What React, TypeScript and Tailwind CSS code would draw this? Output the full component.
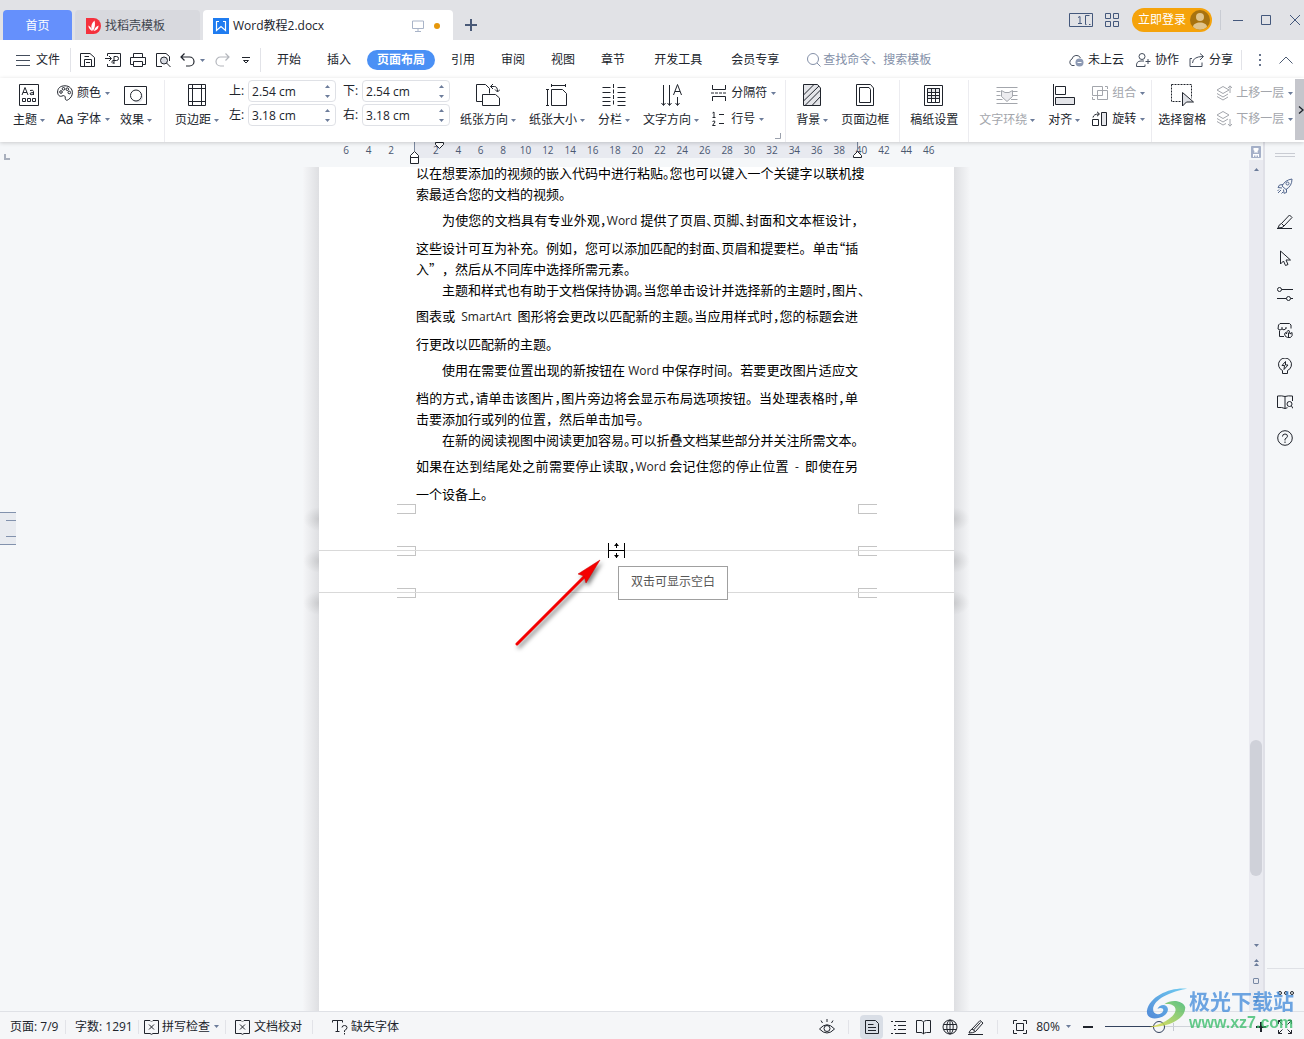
import { Fragment, type ReactNode } from 'react'
import { clsx } from 'clsx'

interface IconProps {
  children: ReactNode
  box?: string
  className?: string
}

function Icon({ children, box = '0 0 16 16', className = 'w-4 h-4' }: IconProps) {
  return (
    <svg viewBox={box} className={clsx('shrink-0', className)} fill="none" stroke="currentColor" aria-hidden="true">
      {children}
    </svg>
  )
}

function Caret() {
  return (
    <svg viewBox="0 0 5 3" className="w-[5px] h-[3px] shrink-0" fill="#6c7c9a" aria-hidden="true">
      <path d="M0 0h5L2.5 3z" />
    </svg>
  )
}

function Sep({ className }: { className?: string }) {
  return <div className={clsx('w-px shrink-0 bg-[#e2e3e8]', className)} />
}

/* ---------- title bar ---------- */

function TitleBar() {
  return (
    <header className="flex h-10 shrink-0 items-end gap-[3px] bg-[#e1e2e6] pl-[3px]">
      <button className="h-[30px] w-[69px] rounded-t bg-[#6590fc] pt-0.5 text-white">首页</button>
      <button className="flex h-[30px] w-[125px] items-center gap-1 rounded-t bg-[#d8d9de] pt-0.5 pl-[11px] text-[#41464f]">
        <Icon className="h-4 w-[15px]" box="0 0 15 16">
          <path d="M0 0h7.500a7.500 8 0 0 1 0 16H0z" fill="#f5313d" stroke="none" />
          <path d="M7 13C4 9 5.500 5.500 8.500 2.500 9.500 6 9 10 7 13zM6.300 13C4.500 12 2.500 10.500 2.300 7.500 4.500 8.500 6 10.500 6.300 13zM8 13c.5-2.500 1.800-4.500 4.500-5.500C12.700 10.500 10.500 12.500 8 13z" fill="#fff" stroke="none" />
        </Icon>
        找稻壳模板
      </button>
      <div className="flex h-[30px] w-[250px] items-center rounded-t bg-white pt-0.5 pr-[13px] pl-2.5">
        <Icon>
          <path d="M0 0h16v16H0z" fill="#1f7cf0" stroke="none" />
          <path d="M3.500 3.500v9L8 8.500l4.500 4v-9" stroke="#fff" strokeWidth="1.200" />
          <path d="M3 3.500h3M10 3.500h3" stroke="#fff" />
        </Icon>
        <span className="ml-1">Word教程2.docx</span>
        <Icon className="ml-auto h-3 w-3" box="0 0 12 12">
          <path d="M.5 1h11v7.500H.5zM6 8.500V11M3 11.500h6" stroke="#a9b4c8" />
        </Icon>
        <span className="ml-2.5 h-1.5 w-1.5 rounded-full bg-[#e6970b]" />
      </div>
      <button aria-label="新建标签" className="ml-[5px] flex h-[30px] w-5 items-center justify-center text-[#4a5a78]">
        <Icon className="h-3 w-3" box="0 0 12 12">
          <path d="M6 0v12M0 6h12" strokeWidth="2" />
        </Icon>
      </button>

      <div className="mr-1 ml-auto flex h-full items-center text-[#44587c]">
        <Icon className="h-4 w-6" box="0 0 24 16">
          <path d="M.5 1.500h23v13H.5zM16.500 3.500h4M16.500 3.500v9h1M20 12.500h1.500M9 11.500h4M11 11.500V4.500L9 5.500" />
        </Icon>
        <Icon className="ml-3 h-3.5 w-3.5" box="0 0 14 14">
          <path d="M.5.5h5v5h-5zM8.500.5h5v5h-5zM.5 8.500h5v5h-5zM8.500 8.500h5v5h-5z" />
        </Icon>
        <button className="ml-[13px] flex h-6 w-20 items-center justify-between rounded-full bg-[#f5a30b] pr-0.5 pl-1.5 text-white">
          立即登录
          <Icon className="h-5 w-5" box="0 0 20 20">
            <circle cx="10" cy="10" r="10" fill="#a8730f" stroke="none" />
            <circle cx="10" cy="7" r="4" fill="#e0c48c" stroke="none" />
            <path d="M3 17c0-6 14-6 14 0a10 10 0 0 1-14 0z" fill="#e0c48c" stroke="none" />
          </Icon>
        </button>
        <Sep className="ml-2 h-5 !bg-[#c9ccd3]" />
        <button aria-label="最小化" className="ml-3"><Icon className="h-2.5 w-2.5" box="0 0 10 10"><path d="M0 5.500h10" /></Icon></button>
        <button aria-label="最大化" className="ml-[18px]"><Icon className="h-2.5 w-2.5" box="0 0 10 10"><path d="M.5.5h9v9h-9z" /></Icon></button>
        <button aria-label="关闭" className="ml-[19px]"><Icon className="h-2.5 w-2.5" box="0 0 10 10"><path d="M0 0l10 10M10 0L0 10" /></Icon></button>
      </div>
    </header>
  )
}

/* ---------- menu row ---------- */

const menuTabs = [
  { label: '开始', gap: 'ml-4' },
  { label: '插入', gap: 'ml-[26px]' },
  { label: '页面布局', gap: 'ml-4', active: true },
  { label: '引用', gap: 'ml-4' },
  { label: '审阅', gap: 'ml-[26px]' },
  { label: '视图', gap: 'ml-[26px]' },
  { label: '章节', gap: 'ml-[26px]' },
  { label: '开发工具', gap: 'ml-[29px]' },
  { label: '会员专享', gap: 'ml-[29px]' },
]

function MenuRow() {
  return (
    <nav className="flex h-[38px] shrink-0 items-center bg-white pt-0.5 pr-[11px] pl-4">
      <button className="flex items-center gap-1.5">
        <Icon className="h-3 w-3.5" box="0 0 14 12"><path d="M0 1.500h14M0 6.500h14M0 11.500h14" stroke="#444d5c" /></Icon>
        文件
      </button>
      <Sep className="ml-2.5 h-6" />
      <button aria-label="保存" className="ml-[9px]">
        <Icon><path d="M.500 1.500h9.500l4.500 4v9H.500zM4.500 14.500v-7h7v7M6 10.500h4M4.500 4.500h4.500" /></Icon>
      </button>
      <button aria-label="输出为PDF" className="ml-[9px]">
        <Icon><path d="M2.500 4V1.500h13v13h-13V12M0 6.500h6M4 4l2.500 2.500L4 9M9 12V4.500h2.500q2 0 2 2t-2 2H8q-1.500.5-1 2t2 0" /></Icon>
      </button>
      <button aria-label="打印" className="ml-[9px]">
        <Icon><path d="M3.500 5.500v-4h9v4M3.500 12.500H.500v-7h15v7h-3M3.500 9.500h9v5h-9z" /></Icon>
      </button>
      <button aria-label="打印预览" className="ml-[9px]">
        <Icon>
          <path d="M7 14.500H1.500v-13H11l3.500 3V9" />
          <circle cx="9" cy="8.500" r="3.500" fill="#d9dce3" />
          <path d="M11.500 11l4 4" />
        </Icon>
      </button>
      <button aria-label="撤销" className="ml-[9px]">
        <Icon><path d="M4.500 1.500L1 5l3.500 3.500M1 5h8.500a4.500 4.500 0 0 1 0 9H6" strokeWidth="1.200" /></Icon>
      </button>
      <button aria-label="撤销历史" className="ml-1 flex"><Caret /></button>
      <button aria-label="恢复" className="ml-[9px] text-[#b3b6bc]">
        <Icon><path d="M11.500 1.500L15 5l-3.500 3.500M15 5H6.500a4.500 4.500 0 0 0 0 9H10" strokeWidth="1.200" /></Icon>
      </button>
      <button aria-label="自定义快速访问工具栏" className="ml-3">
        <Icon className="h-2 w-2" box="0 0 8 8"><path d="M0 1.500h8M1.500 4.500L4 7l2.500-2.500z" /></Icon>
      </button>
      <Sep className="ml-2.5 h-6" />
      {menuTabs.map((tab) => (
        <button
          key={tab.label}
          className={clsx(
            'whitespace-nowrap',
            tab.gap,
            tab.active && 'h-5 rounded-full bg-[#4a90f5] px-2.5 font-bold leading-5 text-white'
          )}
        >
          {tab.label}
        </button>
      ))}
      <label className="ml-7 flex items-center gap-0.5 text-[#8490a8]">
        <Icon className="h-3.5 w-3.5" box="0 0 14 14">
          <circle cx="6" cy="6" r="5.500" />
          <path d="M10 10l3.500 3.500" />
        </Icon>
        <input aria-label="查找命令" placeholder="查找命令、搜索模板" className="w-[120px] bg-transparent placeholder:text-[#8490a8] focus:outline-none" />
      </label>

      <div className="ml-auto flex items-center">
        <button className="flex items-center gap-1">
          <Icon>
            <path d="M6.500 13.500H4A3.500 3.500 0 0 1 4 7a4.500 4.500 0 0 1 8.500-1" stroke="#444d5c" />
            <circle cx="11.500" cy="10.500" r="4" fill="#8c99b3" stroke="none" />
            <path d="M9.500 10.500h4" stroke="#fff" />
          </Icon>
          未上云
        </button>
        <button className="ml-[11px] flex items-center gap-1">
          <Icon>
            <circle cx="7" cy="4.500" r="3" stroke="#444d5c" />
            <path d="M10 14.500H1.500Q1 9 6 9h3M10.500 9.500h5M13 7v5M10 14.500v-2" stroke="#444d5c" />
          </Icon>
          协作
        </button>
        <button className="ml-2.5 flex items-center gap-1">
          <Icon>
            <path d="M3 6.500H1v8h12v-4M3.500 11q.5-6.500 10.500-6.500M11 1.500l3.500 3L11 8" stroke="#444d5c" />
          </Icon>
          分享
        </button>
        <Sep className="ml-2 h-5" />
        <button aria-label="更多" className="ml-4">
          <Icon className="h-3 w-1" box="0 0 4 12"><path d="M1 0h2v2H1zM1 5h2v2H1zM1 10h2v2H1z" fill="#67748c" stroke="none" /></Icon>
        </button>
        <button aria-label="折叠功能区" className="ml-[17px]">
          <Icon className="h-2 w-3.5" box="0 0 14 8"><path d="M.5 7.500L7 1l6.500 6.500" stroke="#4d5b73" /></Icon>
        </button>
      </div>
    </nav>
  )
}

/* ---------- ribbon ---------- */

interface ToolProps {
  label: string
  icon: ReactNode
  caret?: boolean
  disabled?: boolean
  className?: string
}

function BigTool({ label, icon, caret, disabled, className }: ToolProps) {
  return (
    <button className={clsx('-mt-px flex shrink-0 flex-col items-center gap-[3px]', disabled && 'text-[#a3a6ac]', className)}>
      <Icon box="0 0 24 24" className="h-6 w-6">{icon}</Icon>
      <span className="flex items-center gap-[3px] leading-5 whitespace-nowrap">
        {label}
        {caret && <Caret />}
      </span>
    </button>
  )
}

function SmallTool({ label, icon, disabled }: ToolProps) {
  return (
    <button className={clsx('flex items-center gap-1 leading-5 whitespace-nowrap', disabled && 'text-[#a3a6ac]')}>
      <Icon>{icon}</Icon>
      {label}
      <Caret />
    </button>
  )
}

function MarginField({ id, label, value }: { id: string; label: string; value: string }) {
  return (
    <div className="flex items-center gap-1">
      <label htmlFor={id} className="w-[15px] whitespace-nowrap">{label}:</label>
      <div className="flex h-[22px] w-[88px] items-center rounded-sm border border-[#dfe1e6] bg-white pr-[5px] pl-[3px]">
        <input id={id} defaultValue={value} className="w-full min-w-0 bg-transparent pt-px focus:outline-none" />
        <div className="flex flex-col gap-[7px]">
          <button aria-label={`${label}增加`} className="flex rotate-180"><Caret /></button>
          <button aria-label={`${label}减少`} className="flex"><Caret /></button>
        </div>
      </div>
    </div>
  )
}

function RibbonSep({ className }: { className?: string }) {
  return <Sep className={clsx('-mt-1 h-[62px] !bg-[#ececf0]', className)} />
}

function Ribbon() {
  return (
    <section className="relative z-10 flex h-16 shrink-0 items-start bg-white pt-1.5 pl-[13px] shadow-[0_1px_4px_rgba(0,0,0,0.18)]">
      <BigTool
        label="主题" caret
        icon={<>
          <path d="M2.500 1.500h19v21h-19z" />
          <path d="M5 12l3-7.500L11 12M6 9.500h4M13 7.500q3.500-1 3.500 1V12M16.500 9.500q-4 0-3.500 1.500t3.500 0" />
          <path d="M5.500 15.500h3v3h-3zM10.500 15.500h3v3h-3zM15.500 15.500h3v3h-3z" />
        </>}
      />
      <div className="-mt-px ml-3 flex shrink-0 flex-col gap-1.5">
        <SmallTool label="颜色" icon={<>
          <path d="M8 .8C3 .8.600 3.500.600 7S3 12 5 11s3.500 0 3.300 2 1.200 3 3.200 1.500S15.400 11 15.400 7.500 12.500.8 8 .8z" />
          <circle cx="4" cy="7" r="1.300" /><circle cx="6.500" cy="3.800" r="1.300" /><circle cx="10.300" cy="4.200" r="1.300" /><circle cx="12.300" cy="7.500" r="1.300" />
        </>} />
        <button className="flex items-center gap-1 leading-5 whitespace-nowrap">
          <span className="w-4 text-sm leading-5">Aa</span>
          <span>字体</span>
          <Caret />
        </button>
      </div>
      <BigTool
        label="效果" caret className="ml-2.5"
        icon={<>
          <path d="M.500 3.500h22v18H.500z" />
          <circle cx="13.500" cy="14" r="5.500" fill="#dfe1e6" stroke="none" />
          <circle cx="12" cy="12.500" r="5.500" fill="#fff" />
        </>}
      />
      <RibbonSep className="ml-3" />
      <BigTool
        label="页边距" caret className="ml-2.5"
        icon={<path d="M3.500 1.500h17v21h-17zM7.500 1v22M16.500 1v22M3 5.500h18M3 18.500h18" />}
      />
      <div className="-mt-1 ml-2.5 grid shrink-0 grid-cols-2 gap-x-[7px] gap-y-0.5">
        <MarginField id="margin-top" label="上" value="2.54 cm" />
        <MarginField id="margin-bottom" label="下" value="2.54 cm" />
        <MarginField id="margin-left" label="左" value="3.18 cm" />
        <MarginField id="margin-right" label="右" value="3.18 cm" />
      </div>
      <BigTool
        label="纸张方向" caret className="ml-2.5"
        icon={<>
          <path d="M6.500 18.500h-6v-17h9l4 4v5" />
          <path d="M6.500 11.500h13l4 3.500v7.500h-17z" fill="#fff" />
          <path d="M14.500 3.500h4q3 0 3 5M17 1l-2.500 2.500L17 6M19 6.500l2.500 2.500L24 6.500" />
        </>}
      />
      <BigTool
        label="纸张大小" caret className="ml-[13px]"
        icon={<path d="M6.500 6.500h11l4 4v12h-15zM6 2.500h15M6.500 1v3M20.500 1v3M2.500 6v17M1 6.500h3M1 22.500h3" />}
      />
      <BigTool
        label="分栏" caret className="ml-[13px]"
        icon={<>
          <path d="M.500 4.500h8M.500 9.500h8M.500 14.500h8M.500 18.500h8M.500 22.500h8M15.500 4.500h8M15.500 9.500h8M15.500 14.500h8M15.500 18.500h8M15.500 22.500h8" />
          <path d="M11.500 1v22" strokeDasharray="4 1.500" />
        </>}
      />
      <BigTool
        label="文字方向" caret className="ml-[13px]"
        icon={<path d="M4.500 2v20M2.500 20l2 2.500 2-2.500M10.500 2v20M8.500 20l2 2.500 2-2.500M18.500 14v8M16.500 20l2 2.500 2-2.500M14.500 12l4-10.500 4 10.500M16 8.500h5" />}
      />
      <div className="-mt-px ml-3 flex shrink-0 flex-col gap-1.5">
        <SmallTool label="分隔符" icon={<>
          <path d="M1.500 0v4.500h13V0M1.500 16v-4.500h13V16" />
          <path d="M0 8h16" strokeDasharray="3 1" />
        </>} />
        <SmallTool label="行号" icon={<path d="M1.500 2L3 1v5M1.500 6.500h3M1.500 10.500q2.500-1.500 2.500.5L1.500 14.500h3M8 3.500h5M8 12.500h5" />} />
      </div>
      <Icon className="-ml-px mt-[49px] h-1.5 w-1.5" box="0 0 6 6"><path d="M5.500 0v5.500H0" stroke="#9aa0ac" /></Icon>
      <RibbonSep className="ml-1" />
      <BigTool
        label="背景" caret className="ml-2.5"
        icon={<>
          <path d="M3.500 1.500h14l3 3.500v17.500h-17z" fill="#e4e5e9" />
          <path d="M3.500 12L14 1.500M3.500 18L19 3M5 22.500L20.500 7M12 22.500l8.500-9" />
        </>}
      />
      <BigTool
        label="页面边框" className="ml-[13px]"
        icon={<path d="M3.500 1.500h14l3 3.500v17.500h-17zM6.500 4.500h9.500l1.500 2v13h-11z" />}
      />
      <RibbonSep className="ml-2.5" />
      <BigTool
        label="稿纸设置" className="ml-2.5"
        icon={<>
          <path d="M2.500 2.500h18v20h-18z" />
          <path d="M5.500 5.500h12v4h-12zM5.500 12.500h12v3h-12z" fill="#e4e5e9" />
          <path d="M5.500 5.500v14h12v-14M9.500 5.500v14M13.500 5.500v14" />
        </>}
      />
      <RibbonSep className="ml-2.5" />
      <BigTool
        label="文字环绕" caret disabled className="ml-2.5"
        icon={<>
          <path d="M1.500 4.500h21M1.500 20.500h21M1.500 8.500h4M18 8.500h4.500M1.500 12.500h4M18 12.500h4.500M1.500 16.500h6M16 16.500h6.500" />
          <path d="M6.500 7.500l3.500 2h4l3.500-2v6L12 18.500l-5.500-5z" fill="#ececef" />
        </>}
      />
      <BigTool
        label="对齐" caret className="ml-[13px]"
        icon={<>
          <path d="M1.500 1v22M3.500 3.500h10v8h-10z" />
          <path d="M3.500 14.500h19v7h-19z" fill="#e4e5e9" />
        </>}
      />
      <div className="-mt-px ml-3 flex shrink-0 flex-col gap-1.5">
        <SmallTool label="组合" disabled icon={<path d="M.500 1.500h10v9H.500zM5.500 5.500h10v9h-10zM13 1.500h2.500V4M3 14.500H.500V12" />} />
        <SmallTool label="旋转" icon={<>
          <path d="M9.500 1.500h5v13h-5z" fill="#e4e5e9" />
          <path d="M.500 8.500h6v6h-6zM1 6.500Q1.500 3 7 3M5 .800L7.500 3 5 5.200" />
        </>} />
      </div>
      <RibbonSep className="ml-1.5" />
      <BigTool
        label="选择窗格" className="ml-1.5"
        icon={<>
          <path d="M1.500 1.500h20v17h-20z" strokeDasharray="2 1" />
          <path d="M12.500 9.500v13.500l4-4h7z" fill="#dfe1e6" stroke="#fff" strokeWidth="3" />
          <path d="M12.500 9.500v13.500l4-4h7z" fill="#dfe1e6" />
        </>}
      />
      <div className="-mt-px ml-2.5 flex shrink-0 flex-col gap-1.5">
        <SmallTool label="上移一层" disabled icon={<>
          <path d="M1 5l6-3.500L13 5 7 8.500zM1 8.500L7 12l5-3M1 11.500L7 15l5-3" />
          <path d="M14 8V1M12 3l2-2.200L16 3" />
        </>} />
        <SmallTool label="下移一层" disabled icon={<>
          <path d="M1 4l6-3.500L13 4 7 7.500zM1 7.500L7 11l5-3M1 10.500L7 14l3-1.500" />
          <path d="M14 8v7M12 13l2 2.200 2-2.200" />
        </>} />
      </div>
      <button aria-label="向右滚动" className="-mt-[5px] ml-auto flex h-[61px] w-[9px] items-center justify-end bg-[#c5c6cc]">
        <Icon className="h-2 w-1.5" box="0 0 6 8"><path d="M1 .500L5 4 1 7.500" strokeWidth="1.300" /></Icon>
      </button>
    </section>
  )
}

/* ---------- document ---------- */

const rulerMarks = Array.from({ length: 27 }, (_, i) => Math.abs(i * 2 - 6))

function Ruler() {
  return (
    <div className="flex h-[25px] shrink-0 justify-center pl-6">
      <div className="relative w-[635px]">
        <div className="mr-[95px] ml-[95px] h-4 bg-[#e8eaf0]" />
        <div className="absolute inset-x-0 top-0 grid h-4 grid-cols-27 pr-3.5 pl-4 text-center text-[10px] leading-4 text-[#4b5870]">
          {rulerMarks.map((n, i) => <span key={i}>{n === 0 ? '' : n}</span>)}
        </div>
        <Icon className="absolute top-0 left-[90px] h-[22px] w-3" box="0 0 12 22">
          <path d="M5.500 0v9" stroke="#7a889f" />
          <path d="M5.500 9.500l-4 4v2h8v-2zM1.500 15.500h8v6h-8z" fill="#fff" />
        </Icon>
        <Icon className="absolute top-0 left-[116px] h-2 w-2.5" box="0 0 10 8">
          <path d="M.500.500h8v2l-4 4-4-4z" fill="#fff" />
        </Icon>
        <Icon className="absolute top-0 left-[533px] h-4 w-3" box="0 0 12 16">
          <path d="M5.500 0v9" stroke="#7a889f" />
          <path d="M5.500 9.500l-4 4v2h8v-2z" fill="#fff" />
        </Icon>
      </div>
    </div>
  )
}

interface Line {
  text: string
  indent?: boolean
  tall?: boolean
  last?: boolean
  tight?: string
}

// tight: punctuation set in half width, as the justified lines need
const lines: Line[] = [
  { text: '以在想要添加的视频的嵌入代码中进行粘贴。您也可以键入一个关键字以联机搜', tight: '。' },
  { text: '索最适合您的文档的视频。', last: true },
  { text: '为使您的文档具有专业外观，Word 提供了页眉、页脚、封面和文本框设计，', indent: true, tall: true, tight: '，、' },
  { text: '这些设计可互为补充。例如，您可以添加匹配的封面、页眉和提要栏。单击“插', tight: '“、' },
  { text: '入”，然后从不同库中选择所需元素。', last: true },
  { text: '主题和样式也有助于文档保持协调。当您单击设计并选择新的主题时，图片、', indent: true, tight: '。，、' },
  { text: '图表或 SmartArt 图形将会更改以匹配新的主题。当应用样式时，您的标题会进', tall: true, tight: '。，' },
  { text: '行更改以匹配新的主题。', last: true },
  { text: '使用在需要位置出现的新按钮在 Word 中保存时间。若要更改图片适应文', indent: true, tall: true },
  { text: '档的方式，请单击该图片，图片旁边将会显示布局选项按钮。当处理表格时，单', tight: '，' },
  { text: '击要添加行或列的位置，然后单击加号。', last: true },
  { text: '在新的阅读视图中阅读更加容易。可以折叠文档某些部分并关注所需文本。', indent: true, tight: '。' },
  { text: '如果在达到结尾处之前需要停止读取，Word 会记住您的停止位置 - 即使在另', tall: true, tight: '，' },
  { text: '一个设备上。', last: true },
]

function TextLine({ line }: { line: Line }) {
  const parts = line.text.split(/([A-Za-z-]+|[，。、“])/)
  return (
    <p
      className={clsx(
        'whitespace-nowrap',
        line.tall ? 'h-[33px] leading-[31px]' : 'h-[21px] leading-[21px]',
        line.indent && 'pl-[26px]',
        line.last ? 'text-left' : 'text-justify [text-align-last:justify]'
      )}
    >
      {parts.map((part, i) => {
        if (/^[A-Za-z-]+$/.test(part)) {
          return <span key={i} className={clsx("font-['Open_Sans'] text-xs text-[#222]", part !== 'Word' && 'mx-[3px]')}>{part}</span>
        }
        if (part && line.tight?.includes(part)) {
          return <span key={i} className="[font-feature-settings:'halt']">{part}</span>
        }
        return <Fragment key={i}>{part}</Fragment>
      })}
    </p>
  )
}

// corner marks of the text area where the blank space between pages is hidden
function PageBreak({ rule, className }: { rule?: boolean; className?: string }) {
  return (
    <div className={clsx('relative flex h-2.5 justify-between pr-[77px] pl-[78px]', className)}>
      <div className="w-[19px] border-y border-r border-[#c4c4c4]" />
      <div className="w-[19px] border-y border-l border-[#c4c4c4]" />
      {rule && <div className="absolute inset-x-0 top-1 h-px bg-[#d9d9d9]" />}
    </div>
  )
}

function Smudges({ side }: { side: 'left' | 'right' }) {
  const tone = side === 'left'
    ? 'bg-[radial-gradient(ellipse_at_right,rgba(0,0,0,0.1),transparent_70%)]'
    : 'bg-[radial-gradient(ellipse_at_left,rgba(0,0,0,0.1),transparent_70%)]'
  return (
    <div className="flex flex-col gap-[18px] pt-[340px]">
      <div className={clsx('h-6', tone)} />
      <div className={clsx('h-6', tone)} />
      <div className={clsx('h-6', tone)} />
    </div>
  )
}

function Paper() {
  return (
    <div className="flex min-h-0 flex-1 justify-center pl-6">
      <div className="w-4 bg-gradient-to-r from-[#f5f6f8] to-[#dedfe2]"><Smudges side="left" /></div>
      <article className="relative w-[635px] bg-white">
        <div className="-mt-[5px] pr-24 pl-[97px] font-['Noto_Sans_CJK_SC',sans-serif] text-[13px] text-black [text-spacing-trim:space-all]">
          {lines.map((line) => <TextLine key={line.text} line={line} />)}
        </div>
        <PageBreak />
        <PageBreak rule className="mt-8" />
        <PageBreak rule className="mt-8" />

        <Icon className="absolute top-[376px] left-[289px] h-4 w-[17px]" box="0 0 17 16">
          <path d="M.500 0v15M16.500 0v15M0 7.500h17M8.500 0v5M8.500 10v5" stroke="#000" />
          <path d="M8.500 0L6 3h5zM8.500 15L6 12h5z" fill="#000" stroke="none" />
        </Icon>
        <Icon className="absolute top-[390px] left-[194px] h-[94px] w-[94px] drop-shadow-[2px_3px_2px_rgba(0,0,0,0.5)]" box="0 0 94 94">
          <path d="M4 87L74 17" stroke="#f40000" strokeWidth="3" strokeLinecap="round" />
          <path d="M87 3L65 17l6 2 2 7z" fill="#f40000" stroke="#c00" strokeWidth=".5" />
        </Icon>
        <div role="tooltip" className="absolute top-[399px] left-[299px] h-[34px] w-[110px] border border-[#a0a0a0] bg-white text-center leading-[30px] text-[#575757]">
          双击可显示空白
        </div>
      </article>
      <div className="w-4 bg-gradient-to-r from-[#dedfe2] to-[#f5f6f8]"><Smudges side="right" /></div>
    </div>
  )
}

function ScrollBar() {
  return (
    <div className="flex w-4 shrink-0 flex-col items-center border-r-2 border-[#dfe0e7] pt-1">
      <button aria-label="标尺">
        <Icon className="h-3 w-2.5" box="0 0 10 12">
          <path d="M.500.500h9v11h-9z" fill="#a5b0c8" stroke="#a5b0c8" />
          <path d="M2.500 2h5v2L6 5.500h1v1H3v-1h1L2.500 4zM2 8h6v3H7V9.500H5.500V11h-1V9.500H3V11H2z" fill="#fff" stroke="none" />
        </Icon>
      </button>
      <div className="mt-0.5 flex w-full flex-1 flex-col items-center bg-[#e9eaf0] pt-2">
        <button aria-label="向上滚动" className="flex rotate-180"><Caret /></button>
        <div className="w-3 flex-[568]" />
        <div className="w-3 flex-[136] rounded-full bg-[#cfd1d9]" />
        <div className="flex-[68]" />
        <button aria-label="向下滚动" className="flex"><Caret /></button>
        <button aria-label="上一页" className="mt-3 flex rotate-180 flex-col gap-px"><Caret /><Caret /></button>
        <span className="mt-3 h-1.5 w-1.5 rounded-[1px] border border-[#7888a4]" />
        <button aria-label="下一页" className="mt-3 mb-2 flex flex-col gap-px"><Caret /><Caret /></button>
      </div>
    </div>
  )
}

const sideTools: { name: string; icon: ReactNode }[] = [
  { name: '快捷', icon: <><path d="M5 8Q8 2 15 1q0 7-6 10.500zM6 6.500L2.500 7 1 9.500l4 .5M9.500 11v3.500l-2.500.8-.5-3.800M4 12l-3 3M2 11.500L.500 13M6 14l-1.500 1.500" stroke="#54688f" /><circle cx="10.500" cy="5.500" r="1.500" stroke="#54688f" /></> },
  { name: '编辑', icon: <path d="M4.500 9.500L12.500 1l2.500 2.500L7 12M4.500 9.500Q2 10 1 14q5 0 6-2zM0 14.500h15" /> },
  { name: '选择', icon: <path d="M3.500 1v13l3-3 2 4.500 2.500-1-2-4.500h4.500z" /> },
  { name: '属性', icon: <><circle cx="2.500" cy="3.500" r="2" /><path d="M4.500 3.500H16M0 12.500h9.500M13.500 12.500H16" /><circle cx="11.500" cy="12.500" r="2" /></> },
  { name: '素材', icon: <><path d="M1 7l.5-4 1.500-1.500h9.500L14 3v3.500M1 7q2 2 4 0v-2M5 7q2 2 4-.5M2.500 8.500v6H7M9 7V5" /><path d="M8.500 14.500q-2-3 0-4l1 1.500q0-2.500 2-4 1.500 2 1.500 4l2-1.500q1 3.500-1.500 5-3 .5-5-1zM11.500 15.500v-5" /></> },
  { name: '灵感', icon: <path d="M5.500 15.500v-3a6.500 6.500 0 1 1 5 0v3zM8.500 3.500L5 7.500h2.500l-.5 4 4-4.500H8.500z" /> },
  { name: '阅读', icon: <><path d="M8 2.500Q5 1.500.500 2v11.500q4.500-.5 7.500 1zM8 2.500q3-1 7.500-.5v5M8 14.500l2.500-.8" /><circle cx="12.500" cy="10" r="2.500" /><path d="M14.500 12l1.500 2.500" /></> },
  { name: '帮助', icon: <><circle cx="8" cy="8" r="7.300" /><path d="M5.500 6.500q0-2.500 2.500-2.500t2.500 2.200Q10.500 7.500 8 9v1.500M8 11.500V13" /></> },
]

function SideBar() {
  return (
    <aside className="flex w-[39px] shrink-0 flex-col items-center pt-[11px]">
      <div className="h-1 w-5 shrink-0 border-y border-[#c9ccd3]" />
      <div className="mt-[21px] flex flex-col gap-5">
        {sideTools.map((tool) => (
          <button key={tool.name} aria-label={tool.name} className="h-4">
            <Icon>{tool.icon}</Icon>
          </button>
        ))}
      </div>
      <div className="mt-auto flex h-[43px] w-[37px] justify-center self-end border-t border-[#dfe1e6] pt-[22px]">
        <button aria-label="更多工具" className="flex h-1">
          <Icon className="h-1 w-4" box="0 0 16 4"><circle cx="2" cy="2" r="1.500" /><circle cx="8" cy="2" r="1.500" /><circle cx="14" cy="2" r="1.500" /></Icon>
        </button>
      </div>
    </aside>
  )
}

function Workspace() {
  return (
    <main className="relative flex min-h-0 flex-1 overflow-hidden">
      <div className="flex min-w-0 flex-1 flex-col">
        <Ruler />
        <Paper />
      </div>
      <ScrollBar />
      <SideBar />
      <Icon className="absolute top-3 left-1 h-1.5 w-1.5" box="0 0 6 6"><path d="M1 0v5h5" stroke="#a9b0bd" strokeWidth="2" /></Icon>
      <div className="absolute top-[370px] left-0 flex h-[33px] w-4 flex-col justify-between border-y border-[#8292ad] bg-[#e8ebf0] py-[7px] pl-1.5">
        <div className="h-px bg-[#8292ad]" />
        <div className="h-px bg-[#8292ad]" />
      </div>
    </main>
  )
}

/* ---------- status bar ---------- */

const proofIcon = (
  <path d="M7 2.500L6 1.500H.500v13h5.500l1.500.8 1.500-.8h5.500v-13H9L8 2.500M5 5.500l5 5M10 5.500l-5 5" />
)

function StatusBar() {
  return (
    <footer className="flex h-7 shrink-0 items-center border-t border-[#dfe1e6] bg-[#f5f6f8] pt-0.5 pr-3 pl-2.5 whitespace-nowrap">
      <span className="w-[51px]">页面: 7/9</span>
      <Sep className="ml-1 h-3.5" />
      <span className="ml-[9px] w-[59px]">字数: 1291</span>
      <Sep className="ml-1 h-3.5" />
      <button className="ml-[5px] flex items-center gap-0.5">
        <Icon>{proofIcon}</Icon>
        <span className="mr-0.5">拼写检查</span>
        <Caret />
      </button>
      <Sep className="ml-1.5 h-3.5" />
      <button className="ml-[9px] flex items-center gap-[3px]"><Icon>{proofIcon}</Icon>文档校对</button>
      <Sep className="ml-2.5 h-3.5" />
      <button className="ml-[19px] flex items-center gap-[3px]">
        <Icon><path d="M.500 3.500v-2h10v2M5.500 1.500v11M3.500 12.500h4M10 8.500q0-2 2.500-2t2.500 2-2.500 3v1.500M12.500 14v1.500" /></Icon>
        缺失字体
      </button>

      <div className="ml-auto flex items-center">
        <button aria-label="护眼模式">
          <Icon><path d="M.500 10Q8 1.500 15.500 10 8 18 .500 10zM8 3V0M3.500 4L2 1.500M12.500 4L14 1.500" /><circle cx="8" cy="9.500" r="3" /></Icon>
        </button>
        <Sep className="ml-[13px] h-3.5" />
        <button aria-label="页面视图" className="ml-[11px] flex h-6 w-[23px] items-center justify-center rounded-sm bg-[#d9dee6]">
          <Icon><path d="M1.500 1.500h10l3 3v10h-13zM4 5.500h5.500M4 8.500h8M4 11.500h8" /></Icon>
        </button>
        <button aria-label="大纲" className="ml-2"><Icon><path d="M0 2.500h2M4 2.500h11M3 6.500h2M7 6.500h8M3 10.500h2M7 10.500h8M0 14.500h2M4 14.500h11" /></Icon></button>
        <button aria-label="阅读版式" className="ml-[9px]"><Icon><path d="M7.500 3Q6.500 1.500 5 1.500H.500v12H5q1.500 0 2.500 1.500 1-1.500 3-1.500h4v-12h-4Q8.500 1.500 7.500 3zV15" /></Icon></button>
        <button aria-label="Web版式" className="ml-2.5"><Icon><circle cx="8" cy="8" r="7" /><ellipse cx="8" cy="8" rx="3.200" ry="7" /><path d="M8 1v14M1.500 5.500h13M1.500 10.500h13" /></Icon></button>
        <button aria-label="写作模式" className="ml-2.5"><Icon><path d="M4 10L12 1.500l3 2.500-7.500 8.500M4 10Q1.500 11.500 1 14q4 0 6.500-1.500zM5.500 11l7-7.500M0 15.500h15" /></Icon></button>
        <Sep className="ml-[13px] h-3.5" />
        <button aria-label="最佳显示比例" className="ml-[15px]"><Icon className="h-3.5 w-3.5" box="0 0 14 14"><path d="M.500 4V.500H4M10 .500h3.500V4M13.500 10v3.500H10M4 13.500H.500V10M3.500 3.500h7v7h-7z" /></Icon></button>
        <button className="ml-2 flex items-center gap-[5px]"><span className="w-[26px]">80%</span><Caret /></button>
        <button aria-label="缩小" className="ml-3 flex"><Icon className="h-2.5 w-2.5" box="0 0 10 10"><path d="M0 5h10" strokeWidth="2" /></Icon></button>
        <div className="relative ml-3 flex h-4 w-[145px] items-center">
          <div className="absolute top-1 left-[68px] h-2 w-px bg-[#c5c9d2]" />
          <input
            type="range"
            aria-label="缩放"
            min={0}
            max={100}
            defaultValue={36}
            className="relative h-px w-full appearance-none bg-linear-to-r from-[#33425e] from-36% to-[#cfd2d9] to-36% [&::-webkit-slider-thumb]:h-3 [&::-webkit-slider-thumb]:w-3 [&::-webkit-slider-thumb]:appearance-none [&::-webkit-slider-thumb]:rounded-full [&::-webkit-slider-thumb]:border [&::-webkit-slider-thumb]:border-[#33425e] [&::-webkit-slider-thumb]:bg-[#f5f6f8]"
          />
        </div>
        <button aria-label="放大" className="ml-1.5 flex"><Icon className="h-2.5 w-2.5" box="0 0 10 10"><path d="M0 5h10M5 0v10" strokeWidth="2" /></Icon></button>
        <button aria-label="全屏" className="ml-3"><Icon className="h-3.5 w-3.5" box="0 0 14 14"><path d="M.500 4V.500H4M10 .500h3.500V4M13.500 10v3.500H10M4 13.500H.500V10M.500.500l4 4M13.500.500l-4 4M.500 13.500l4-4M13.500 13.500l-4-4" /></Icon></button>
      </div>
    </footer>
  )
}

function Watermark() {
  return (
    <div className="pointer-events-none absolute right-2.5 bottom-1.5 z-20 flex items-start opacity-80">
      <svg viewBox="0 0 46 42" className="h-[42px] w-11" aria-hidden="true">
        <defs>
          <linearGradient id="swirl-blue" x1="0" y1="1" x2="1" y2="0">
            <stop offset="0" stopColor="#2a6fd0" />
            <stop offset="1" stopColor="#4fc3f0" />
          </linearGradient>
          <linearGradient id="swirl-green" x1="0" y1="1" x2="1" y2="0">
            <stop offset="0" stopColor="#e8dc3c" />
            <stop offset="1" stopColor="#35b56a" />
          </linearGradient>
        </defs>
        <path d="M44 1C28-1 5 8 2 24c-.500 5 3 8 8 8 7 0 14-4 14-10-1-6-9-5-11 0 3-2 7-1 6 2-1 4-8 5-10 1C6 17 17 6 44 1z" fill="url(#swirl-blue)" />
        <path d="M20 17c9-6 20-3 22 3 1 10-13 21-38 21 14-3 27-10 28-18 0-5-6-7-12-6z" fill="url(#swirl-green)" />
      </svg>
      <div className="flex flex-col pt-0.5 font-bold">
        <span className="text-[21px] leading-6 text-[#4a90dc]">极光下载站</span>
        <span className="font-['Liberation_Sans'] text-base leading-5 text-[#3fbf6f]">www.xz7.com</span>
      </div>
    </div>
  )
}

export default function App() {
  return (
    <div className="relative flex h-screen flex-col overflow-hidden bg-[#f5f7f9] font-['Open_Sans','Noto_Sans_CJK_SC',sans-serif] text-xs text-[#20242c]">
      <TitleBar />
      <MenuRow />
      <Ribbon />
      <Workspace />
      <StatusBar />
      <Watermark />
    </div>
  )
}
